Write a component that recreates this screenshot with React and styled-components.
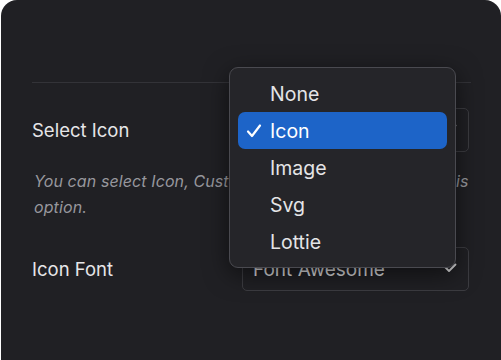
import React from "react"
import styled, { createGlobalStyle } from "styled-components"

const GlobalStyle = createGlobalStyle`
  html, body {
    margin: 0;
    padding: 0;
    background: #ffffff;
    font-family: "Inter", "Liberation Sans", sans-serif;
  }
`

const Panel = styled.div`
  position: relative;
  width: 500px;
  height: 360px;
  margin-left: 1px;
  background: #202024;
  border-radius: 16px 16px 0 0;
  padding: 82px 31px 0 31px;
  box-sizing: border-box;
  overflow: hidden;
`

const Divider = styled.div`
  height: 1px;
  background: #333338;
  margin-right: -1px;
`

const Row = styled.div`
  display: flex;
  align-items: center;
  justify-content: space-between;
  margin-top: ${p => p.$top}px;
`

const Label = styled.div`
  font-size: 18.5px;
  color: #e6e6e8;
`

const SelectBox = styled.div`
  position: relative;
  width: 227px;
  height: 44px;
  box-sizing: border-box;
  border: 1px solid #3c3c41;
  border-radius: 5px;
  margin-right: 1px;
  display: flex;
  align-items: center;
  padding-left: 10px;
  font-size: 19px;
  color: #dcdcde;
`

const Chevron = styled.svg`
  position: absolute;
  right: 11px;
  top: 50%;
  margin-top: -6px;
`

const Description = styled.div`
  margin: 16px 0 0 2px;
  font-size: 16px;
  line-height: 26px;
  font-style: italic;
  letter-spacing: 0.1px;
  color: #97979d;
`

const Line = styled.div`
  white-space: nowrap;
`

const Menu = styled.div`
  position: absolute;
  left: 228px;
  top: 67px;
  width: 227px;
  box-sizing: border-box;
  padding: 7px 8px;
  background: #252529;
  border: 1px solid #4a4a50;
  border-radius: 9px;
  box-shadow: 0 6px 24px rgba(0, 0, 0, 0.55);
`

const Item = styled.div`
  position: relative;
  height: 37px;
  display: flex;
  align-items: center;
  padding-left: 32px;
  border-radius: 7px;
  font-size: 19.5px;
  background: ${p => (p.$active ? "#1d64c8" : "transparent")};
  color: ${p => (p.$active ? "#ffffff" : "#e4e4e6")};
`

const Check = styled.svg`
  position: absolute;
  left: 8px;
  top: 50%;
  margin-top: -8px;
`

const options = ["None", "Icon", "Image", "Svg", "Lottie"]

function ChevronIcon() {
  return (
    <Chevron width="16" height="10" viewBox="0 0 16 10">
      <path d="M1.5 1.5 L8 8 L14.5 1.5" fill="none" stroke="#d8d8da" strokeWidth="1.8" strokeLinecap="round" strokeLinejoin="round" />
    </Chevron>
  )
}

export default function App() {
  return (
    <>
      <GlobalStyle />
      <Panel>
        <Divider />
        <Row $top={25}>
          <Label>Select Icon</Label>
          <SelectBox>
            Icon
            <ChevronIcon />
          </SelectBox>
        </Row>
        <Description>
          <Line>You can select Icon, Custom Image, Svg or Lottie for this</Line>
          <Line>option.</Line>
        </Description>
        <Row $top={27}>
          <Label>Icon Font</Label>
          <SelectBox>
            Font Awesome
            <ChevronIcon />
          </SelectBox>
        </Row>
        <Menu>
          {options.map(opt => (
            <Item key={opt} $active={opt === "Icon"}>
              {opt === "Icon" && (
                <Check width="16" height="16" viewBox="0 0 16 16">
                  <path d="M2 8.5 L6 13 L14 2.5" fill="none" stroke="#ffffff" strokeWidth="2.2" strokeLinecap="round" strokeLinejoin="round" />
                </Check>
              )}
              {opt}
            </Item>
          ))}
        </Menu>
      </Panel>
    </>
  )
}
